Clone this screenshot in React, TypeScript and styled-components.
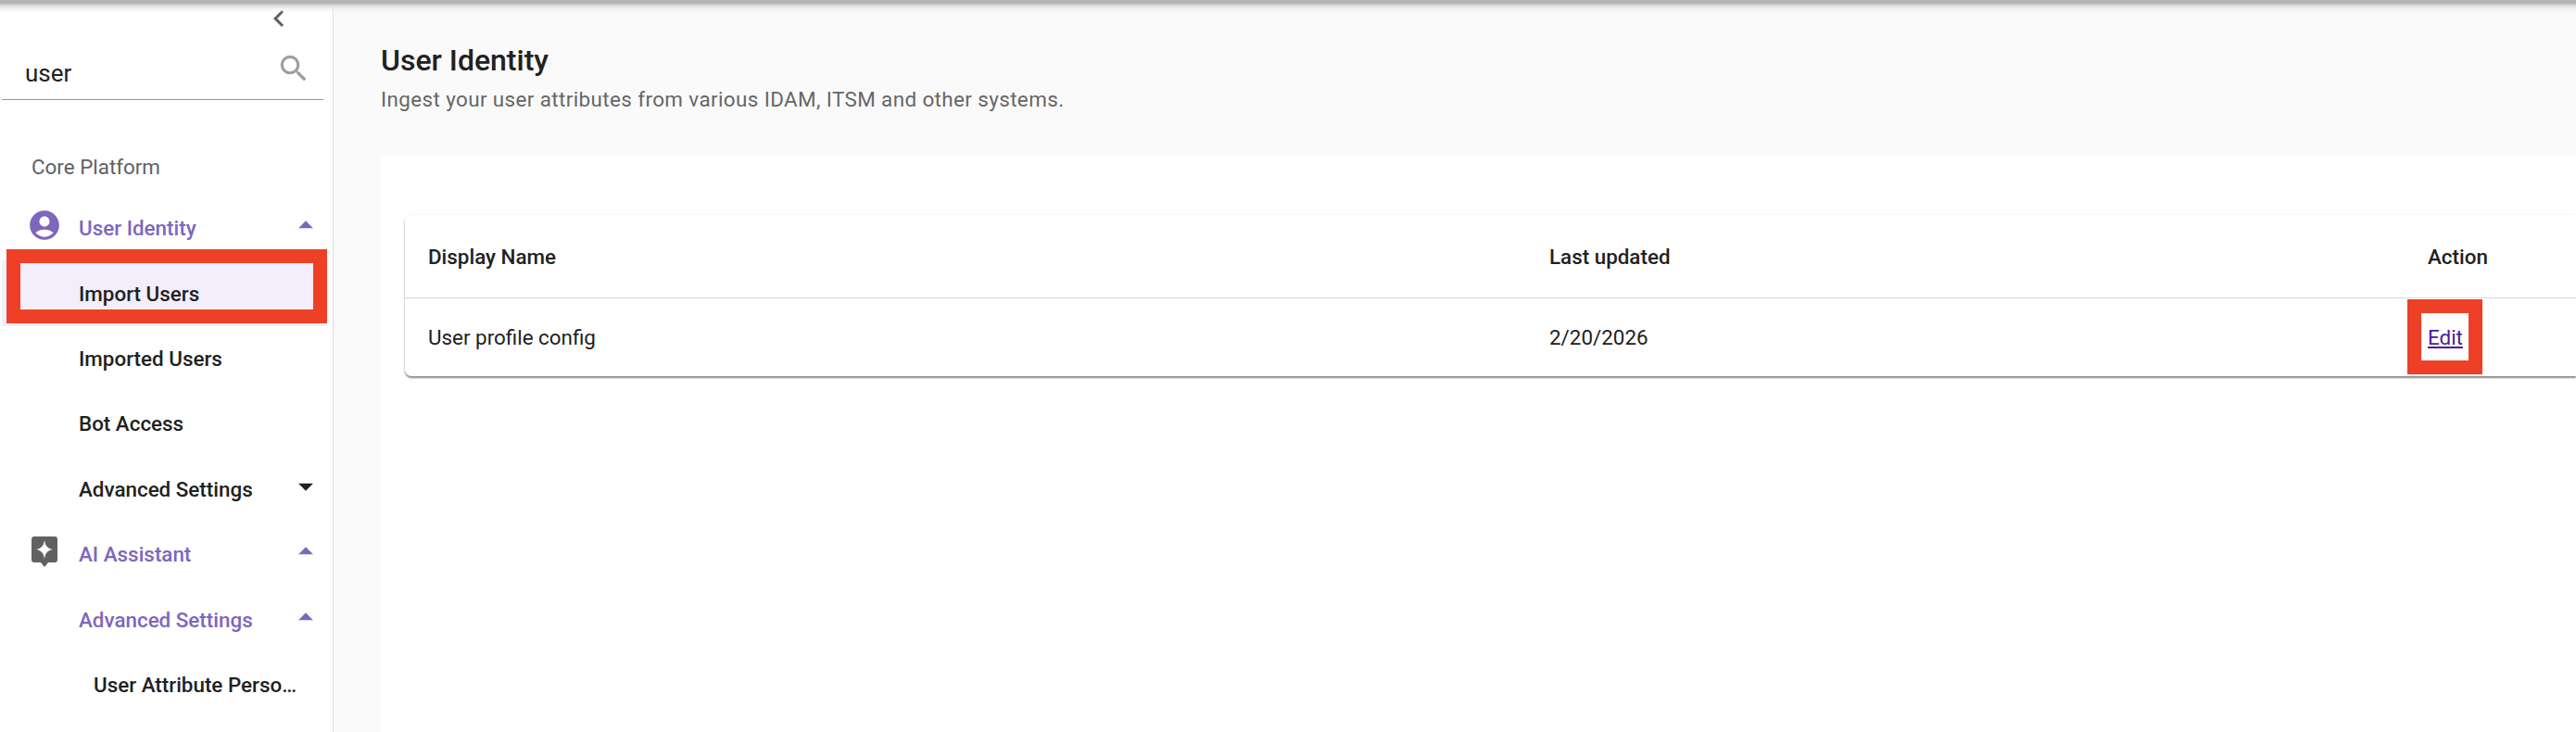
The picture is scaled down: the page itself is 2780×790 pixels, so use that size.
import React from 'react';
import styled, { createGlobalStyle } from 'styled-components';
import { MdAccountCircle, MdArrowDropDown, MdArrowDropUp, MdChevronLeft, MdSearch } from 'react-icons/md';

const GlobalStyle = createGlobalStyle`
  html, body {
    margin: 0;
    padding: 0;
    background: #fafafa;
  }
  body {
    font-family: Roboto, "Liberation Sans", sans-serif;
  }
`;

const Page = styled.div`
  position: relative;
  display: flex;
  width: 2780px;
  height: 790px;
  overflow: hidden;
`;

const TopShadow = styled.div`
  position: absolute;
  top: 0;
  left: 0;
  right: 0;
  height: 14px;
  background: linear-gradient(#b8b8b8 0, #b0b0b0 3px, #dcdcdc 6px, rgba(235, 235, 235, 0.5) 10px, rgba(240, 240, 240, 0) 14px);
`;

const Sidebar = styled.aside`
  flex: 0 0 360px;
  box-sizing: border-box;
  background: #fff;
  border-right: 1px solid #e0e0e0;
  padding-left: 2px;
`;

const CollapseRow = styled.div`
  display: flex;
  justify-content: flex-end;
  height: 40px;
  padding-top: 2px;
  box-sizing: border-box;
  padding-right: 40px;
  color: #616161;
  font-size: 36px;
`;

const SearchBox = styled.div`
  display: flex;
  align-items: center;
  justify-content: space-between;
  width: 347px;
  height: 68px;
  box-sizing: border-box;
  border-bottom: 1px solid #949494;
  padding: 0 13px 0 25px;
  font-size: 26px;
  color: #212121;
  span {
    padding-top: 11px;
  }
  svg {
    color: #9e9e9e;
    font-size: 38px;
  }
`;

const SectionLabel = styled.div`
  margin-top: 51px;
  padding-left: 32px;
  font-size: 22.4px;
  line-height: 43px;
  color: #616161;
`;

const NavList = styled.nav`
  width: 347px;
  margin-top: 9px;
`;

const Row = styled.div<{ $indent: number; $active?: boolean; $selected?: boolean }>`
  position: relative;
  display: flex;
  align-items: center;
  height: 70.4px;
  box-sizing: border-box;
  padding-left: ${(p) => p.$indent}px;
  font-size: 22.4px;
  font-weight: 500;
  color: ${(p) => (p.$active ? '#7e66bd' : '#212121')};
  background: ${(p) => (p.$selected ? '#f3edfc' : 'transparent')};
`;

const RowIcon = styled.span<{ $color: string; $width: number }>`
  display: flex;
  flex: 0 0 ${(p) => p.$width}px;
  margin-top: -6px;
  color: ${(p) => p.$color};
  font-size: 38px;
`;

const Label = styled.span`
  display: block;
  white-space: nowrap;
`;

const Caret = styled.span`
  display: flex;
  margin-left: auto;
  margin-bottom: 6px;
  font-size: 38px;
`;

const Highlight = styled.div<{ $top: number; $left: number; $width: number; $height: number }>`
  position: absolute;
  top: ${(p) => p.$top}px;
  left: ${(p) => p.$left}px;
  width: ${(p) => p.$width}px;
  height: ${(p) => p.$height}px;
  box-sizing: border-box;
  border: 15px solid #ee4026;
  pointer-events: none;
`;

const Main = styled.main`
  flex: 1;
  min-width: 0;
  padding: 46px 0 0 51px;
  background: #fafafa;
`;

const Title = styled.h1`
  margin: 0;
  font-size: 32px;
  font-weight: 500;
  line-height: 38px;
  color: #212121;
`;

const Subtitle = styled.p`
  margin: 8px 0 0;
  font-size: 22.4px;
  line-height: 30px;
  letter-spacing: 0.4px;
  color: #666;
`;

const Panel = styled.section`
  height: 700px;
  margin-top: 46px;
  padding: 64px 0 0 26px;
  background: #fff;
`;

const Table = styled.div`
  border-radius: 7px 0 0 7px;
  background: #fff;
  box-shadow: 0 2px 2px rgba(0, 0, 0, 0.45), 0 0 3px rgba(0, 0, 0, 0.08);
`;

const TableRow = styled.div<{ $header?: boolean }>`
  display: grid;
  grid-template-columns: 1210px 948px 1fr;
  align-items: center;
  height: ${(p) => (p.$header ? 90 : 84)}px;
  box-sizing: border-box;
  padding-left: 25px;
  border-bottom: ${(p) => (p.$header ? '1px solid #d9d9d9' : 'none')};
  font-size: 22.4px;
  font-weight: ${(p) => (p.$header ? 500 : 400)};
  color: #212121;
`;

const EditCell = styled.div`
  position: relative;
  justify-self: start;
`;

const EditLink = styled.a`
  color: #4a1d8f;
  text-decoration: underline;
`;

const AiIcon = () => (
  <svg width="28" height="33" viewBox="0 0 28 33" aria-hidden="true">
    <path
      d="M3 0h22a3 3 0 0 1 3 3v22a3 3 0 0 1-3 3h-7l-4 5-4-5H3a3 3 0 0 1-3-3V3a3 3 0 0 1 3-3z"
      fill="#616161"
    />
    <path d="M14 4c1 6 3 8.500 9 10-6 1.500-8 4-9 10-1-6-3-8.500-9-10 6-1.500 8-4 9-10z" fill="#fff" />
  </svg>
);

const App = () => {
  return (
    <Page>
      <GlobalStyle />
      <Sidebar>
        <CollapseRow>
          <MdChevronLeft />
        </CollapseRow>
        <SearchBox>
          <span>user</span>
          <MdSearch />
        </SearchBox>
        <SectionLabel>Core Platform</SectionLabel>
        <NavList>
          <Row $indent={27} $active>
            <RowIcon $color="#7e66bd" $width={56}>
              <MdAccountCircle />
            </RowIcon>
            <Label>User Identity</Label>
            <Caret>
              <MdArrowDropUp />
            </Caret>
          </Row>
          <Row $indent={83} $selected>
            <Label>Import Users</Label>
            <Highlight $top={-12} $left={5} $width={346} $height={80} />
          </Row>
          <Row $indent={83}>
            <Label>Imported Users</Label>
          </Row>
          <Row $indent={83}>
            <Label>Bot Access</Label>
          </Row>
          <Row $indent={83}>
            <Label>Advanced Settings</Label>
            <Caret>
              <MdArrowDropDown />
            </Caret>
          </Row>
          <Row $indent={32} $active>
            <RowIcon $color="#616161" $width={51}>
              <AiIcon />
            </RowIcon>
            <Label>AI Assistant</Label>
            <Caret>
              <MdArrowDropUp />
            </Caret>
          </Row>
          <Row $indent={83} $active>
            <Label>Advanced Settings</Label>
            <Caret>
              <MdArrowDropUp />
            </Caret>
          </Row>
          <Row $indent={99}>
            <Label>User Attribute Perso…</Label>
          </Row>
        </NavList>
      </Sidebar>
      <Main>
        <Title>User Identity</Title>
        <Subtitle>Ingest your user attributes from various IDAM, ITSM and other systems.</Subtitle>
        <Panel>
          <Table>
            <TableRow $header>
              <div>Display Name</div>
              <div>Last updated</div>
              <div>Action</div>
            </TableRow>
            <TableRow>
              <div>User profile config</div>
              <div>2/20/2026</div>
              <EditCell>
                <EditLink href="#">Edit</EditLink>
                <Highlight $top={-28} $left={-22} $width={81} $height={81} />
              </EditCell>
            </TableRow>
          </Table>
        </Panel>
      </Main>
      <TopShadow />
    </Page>
  );
};

export default App;
